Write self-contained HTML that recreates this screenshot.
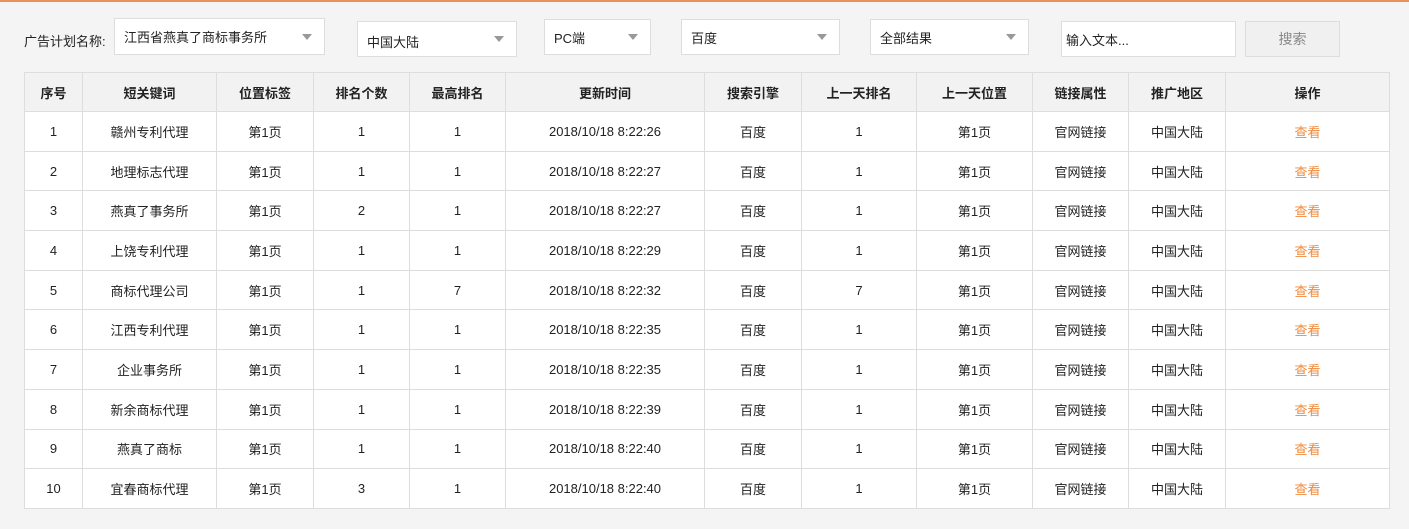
<!DOCTYPE html>
<html><head><meta charset="utf-8"><style>
*{box-sizing:border-box;margin:0;padding:0}
body{width:1409px;height:529px;background:#f4f4f4;font-family:"Liberation Sans","Noto Sans CJK SC",sans-serif;font-size:13px;color:#222;position:relative;overflow:hidden}
.top{position:absolute;left:0;top:0;width:1409px;height:2px;background:#e8915a}
.lbl{position:absolute;left:24px;top:31px;font-size:13px}
.sel{position:absolute;background:#fff;border:1px solid #ddd;font-size:13px;padding-left:9px;display:flex;align-items:center}
.arr:after{content:"";position:absolute;right:12px;top:50%;margin-top:-3px;border-left:5px solid transparent;border-right:5px solid transparent;border-top:6px solid #999}
.btn{position:absolute;left:1245px;top:21px;width:95px;height:36px;border:1px solid #ddd;background:#f0f0f0;color:#888;font-size:14px;display:flex;align-items:center;justify-content:center}
table{position:absolute;left:24px;top:72px;width:1366px;border-collapse:collapse;background:#fff;table-layout:fixed}
td,th{border:1px solid #ddd;text-align:center;height:39.7px;font-size:13px;font-weight:normal}
th{background:#f2f2f2;height:39px;font-weight:bold}
a{color:#f08a3c;text-decoration:none}
</style></head><body>
<div class="top"></div>
<div class="lbl">广告计划名称:</div>
<div class="sel arr" style="left:114px;top:18px;width:211px;height:37px">江西省燕真了商标事务所</div>
<div class="sel arr" style="left:357px;top:21px;width:160px;height:36px;padding-top:4px">中国大陆</div>
<div class="sel arr" style="left:544px;top:19px;width:107px;height:36px">PC端</div>
<div class="sel arr" style="left:681px;top:19px;width:159px;height:36px">百度</div>
<div class="sel arr" style="left:870px;top:19px;width:159px;height:36px">全部结果</div>
<div class="sel" style="left:1061px;top:21px;width:175px;height:36px;padding-left:4px">输入文本...</div>
<div class="btn">搜索</div>
<table>
<colgroup><col style="width:58px"><col style="width:134px"><col style="width:97px"><col style="width:96px"><col style="width:96px"><col style="width:199px"><col style="width:97px"><col style="width:115px"><col style="width:116px"><col style="width:96px"><col style="width:97px"><col></colgroup>
<tr><th>序号</th><th>短关键词</th><th>位置标签</th><th>排名个数</th><th>最高排名</th><th>更新时间</th><th>搜索引擎</th><th>上一天排名</th><th>上一天位置</th><th>链接属性</th><th>推广地区</th><th>操作</th></tr>
<tr><td>1</td><td>赣州专利代理</td><td>第1页</td><td>1</td><td>1</td><td>2018/10/18 8:22:26</td><td>百度</td><td>1</td><td>第1页</td><td>官网链接</td><td>中国大陆</td><td><a>查看</a></td></tr>
<tr><td>2</td><td>地理标志代理</td><td>第1页</td><td>1</td><td>1</td><td>2018/10/18 8:22:27</td><td>百度</td><td>1</td><td>第1页</td><td>官网链接</td><td>中国大陆</td><td><a>查看</a></td></tr>
<tr><td>3</td><td>燕真了事务所</td><td>第1页</td><td>2</td><td>1</td><td>2018/10/18 8:22:27</td><td>百度</td><td>1</td><td>第1页</td><td>官网链接</td><td>中国大陆</td><td><a>查看</a></td></tr>
<tr><td>4</td><td>上饶专利代理</td><td>第1页</td><td>1</td><td>1</td><td>2018/10/18 8:22:29</td><td>百度</td><td>1</td><td>第1页</td><td>官网链接</td><td>中国大陆</td><td><a>查看</a></td></tr>
<tr><td>5</td><td>商标代理公司</td><td>第1页</td><td>1</td><td>7</td><td>2018/10/18 8:22:32</td><td>百度</td><td>7</td><td>第1页</td><td>官网链接</td><td>中国大陆</td><td><a>查看</a></td></tr>
<tr><td>6</td><td>江西专利代理</td><td>第1页</td><td>1</td><td>1</td><td>2018/10/18 8:22:35</td><td>百度</td><td>1</td><td>第1页</td><td>官网链接</td><td>中国大陆</td><td><a>查看</a></td></tr>
<tr><td>7</td><td>企业事务所</td><td>第1页</td><td>1</td><td>1</td><td>2018/10/18 8:22:35</td><td>百度</td><td>1</td><td>第1页</td><td>官网链接</td><td>中国大陆</td><td><a>查看</a></td></tr>
<tr><td>8</td><td>新余商标代理</td><td>第1页</td><td>1</td><td>1</td><td>2018/10/18 8:22:39</td><td>百度</td><td>1</td><td>第1页</td><td>官网链接</td><td>中国大陆</td><td><a>查看</a></td></tr>
<tr><td>9</td><td>燕真了商标</td><td>第1页</td><td>1</td><td>1</td><td>2018/10/18 8:22:40</td><td>百度</td><td>1</td><td>第1页</td><td>官网链接</td><td>中国大陆</td><td><a>查看</a></td></tr>
<tr><td>10</td><td>宜春商标代理</td><td>第1页</td><td>3</td><td>1</td><td>2018/10/18 8:22:40</td><td>百度</td><td>1</td><td>第1页</td><td>官网链接</td><td>中国大陆</td><td><a>查看</a></td></tr>
</table>
</body></html>
